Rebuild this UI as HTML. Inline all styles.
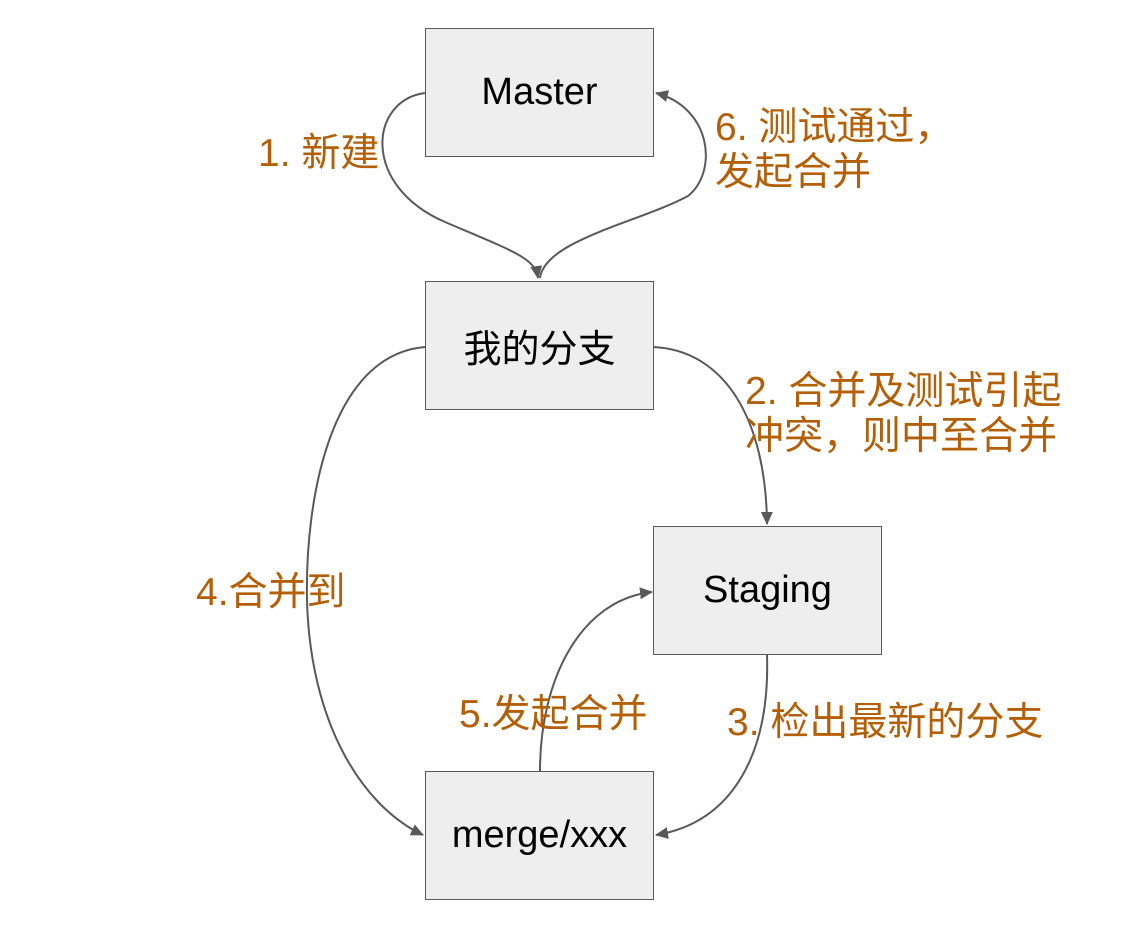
<!DOCTYPE html>
<html><head><meta charset="utf-8"><style>
html,body{margin:0;padding:0;background:#fff;}
body{width:1126px;height:930px;position:relative;overflow:hidden;font-family:"Liberation Sans","Noto Sans CJK SC",sans-serif;}
.b{position:absolute;width:229px;height:129px;background:#eeeeee;border:1.5px solid #595959;box-sizing:border-box;display:flex;align-items:center;justify-content:center;font-size:38px;color:#000;}
.t{position:absolute;color:#b45f06;font-size:39px;line-height:45px;white-space:nowrap;}
svg{position:absolute;left:0;top:0;}
</style></head><body>
<svg width="1126" height="930" viewBox="0 0 1126 930">
<defs><marker id="m" markerWidth="14" markerHeight="14" refX="12" refY="7" orient="auto" markerUnits="userSpaceOnUse"><path d="M0,1 L13,7 L0,13 z" fill="#595959"/></marker></defs>
<g fill="none" stroke="#595959" stroke-width="2">
<path d="M425,93 C370,100 360,185 445,222 C515,252 535,258 538,278" marker-end="url(#m)"/>
<path d="M540,278 C545,240 640,222 688,196 C718,172 712,108 656,93" marker-end="url(#m)"/>
<path d="M653,347 C725,350 766,420 767,524" marker-end="url(#m)"/>
<path d="M425,347 C330,355 305,500 307,600 C310,720 360,805 423,835" marker-end="url(#m)"/>
<path d="M540,771 C540,680 580,600 652,592" marker-end="url(#m)"/>
<path d="M767,655 C770,750 735,822 656,835" marker-end="url(#m)"/>
</g></svg>
<div class="b" style="left:425px;top:28px;">Master</div>
<div class="b" style="left:425px;top:281px;">我的分支</div>
<div class="b" style="left:653px;top:526px;">Staging</div>
<div class="b" style="left:425px;top:771px;">merge/xxx</div>
<div class="t" style="left:258px;top:131px;">1. 新建</div>
<div class="t" style="left:715px;top:105px;">6. 测试通过，<br>发起合并</div>
<div class="t" style="left:745px;top:369px;">2. 合并及测试引起<br>冲突，则中至合并</div>
<div class="t" style="left:196px;top:570px;">4.合并到</div>
<div class="t" style="left:459px;top:692px;">5.发起合并</div>
<div class="t" style="left:727px;top:700px;">3. 检出最新的分支</div>
</body></html>
